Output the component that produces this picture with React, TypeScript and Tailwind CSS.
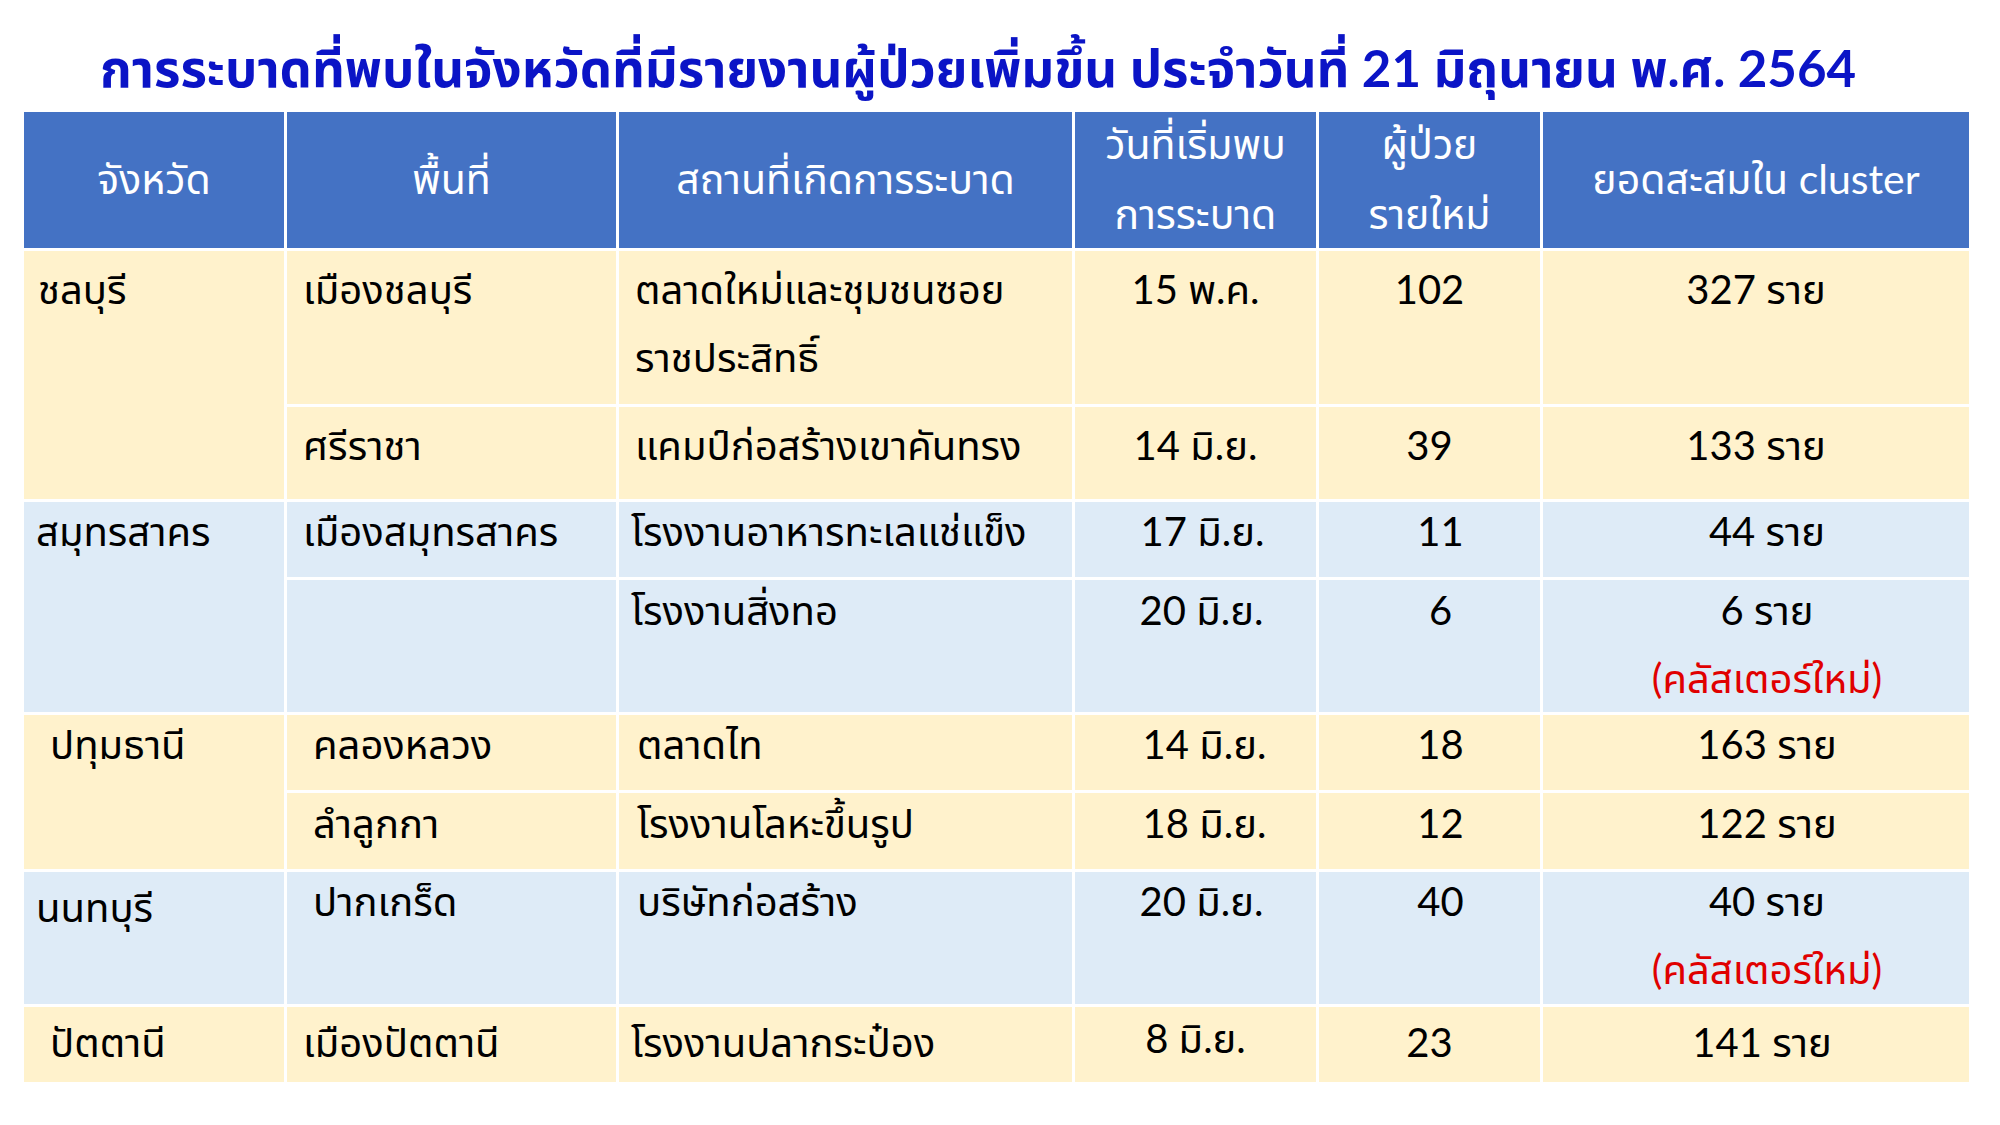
import React from 'react';

const FONT = "font-['Lato','Noto_Sans_Thai','Noto_Sans_Thai_Looped','Garuda','Loma','Waree','Tahoma','Noto_Sans',sans-serif]";

type Cell = {
  lines: string[];
  bg: 'y' | 'b';
  align?: 'left' | 'center';
  pad?: string;
  span?: boolean;
  note?: boolean;
};

const rows: Cell[][] = [
  [
    { lines: ['ชลบุรี'], bg: 'y', span: true, pad: 'pl-[14px] pt-[13px]' },
    { lines: ['เมืองชลบุรี'], bg: 'y', pad: 'pl-[16px] pt-[13px]' },
    { lines: ['ตลาดใหม่และชุมชนซอย', 'ราชประสิทธิ์'], bg: 'y', pad: 'pl-[16px] pt-[13px]' },
    { lines: ['15 พ.ค.'], bg: 'y', align: 'center', pad: 'pt-[13px]' },
    { lines: ['102'], bg: 'y', align: 'center', pad: 'pt-[13px]' },
    { lines: ['327 ราย'], bg: 'y', align: 'center', pad: 'pt-[13px]' },
  ],
  [
    { lines: ['ศรีราชา'], bg: 'y', pad: 'pl-[16px] pt-[13px]' },
    { lines: ['แคมป์ก่อสร้างเขาคันทรง'], bg: 'y', pad: 'pl-[16px] pt-[13px]' },
    { lines: ['14 มิ.ย.'], bg: 'y', align: 'center', pad: 'pt-[13px]' },
    { lines: ['39'], bg: 'y', align: 'center', pad: 'pt-[13px]' },
    { lines: ['133 ราย'], bg: 'y', align: 'center', pad: 'pt-[13px]' },
  ],
  [
    { lines: ['สมุทรสาคร'], bg: 'b', span: true, pad: 'pl-[12px] pt-[4px]' },
    { lines: ['เมืองสมุทรสาคร'], bg: 'b', pad: 'pl-[16px] pt-[4px]' },
    { lines: ['โรงงานอาหารทะเลแช่แข็ง'], bg: 'b', pad: 'pl-[12px] pt-[4px]' },
    { lines: ['17 มิ.ย.'], bg: 'b', align: 'center', pad: 'pl-[14px] pt-[4px]' },
    { lines: ['11'], bg: 'b', align: 'center', pad: 'pl-[22px] pt-[4px]' },
    { lines: ['44 ราย'], bg: 'b', align: 'center', pad: 'pl-[22px] pt-[4px]' },
  ],
  [
    { lines: [''], bg: 'b' },
    { lines: ['โรงงานสิ่งทอ'], bg: 'b', pad: 'pl-[12px] pt-[5px]' },
    { lines: ['20 มิ.ย.'], bg: 'b', align: 'center', pad: 'pl-[12px] pt-[5px]' },
    { lines: ['6'], bg: 'b', align: 'center', pad: 'pl-[22px] pt-[5px]' },
    { lines: ['6 ราย', '(คลัสเตอร์ใหม่)'], bg: 'b', align: 'center', note: true, pad: 'pl-[22px] pt-[5px]' },
  ],
  [
    { lines: ['ปทุมธานี'], bg: 'y', span: true, pad: 'pl-[26px] pt-[4px]' },
    { lines: ['คลองหลวง'], bg: 'y', pad: 'pl-[26px] pt-[4px]' },
    { lines: ['ตลาดไท'], bg: 'y', pad: 'pl-[18px] pt-[4px]' },
    { lines: ['14 มิ.ย.'], bg: 'y', align: 'center', pad: 'pl-[18px] pt-[4px]' },
    { lines: ['18'], bg: 'y', align: 'center', pad: 'pl-[22px] pt-[4px]' },
    { lines: ['163 ราย'], bg: 'y', align: 'center', pad: 'pl-[22px] pt-[4px]' },
  ],
  [
    { lines: ['ลำลูกกา'], bg: 'y', pad: 'pl-[26px] pt-[5px]' },
    { lines: ['โรงงานโลหะขึ้นรูป'], bg: 'y', pad: 'pl-[18px] pt-[5px]' },
    { lines: ['18 มิ.ย.'], bg: 'y', align: 'center', pad: 'pl-[18px] pt-[5px]' },
    { lines: ['12'], bg: 'y', align: 'center', pad: 'pl-[22px] pt-[5px]' },
    { lines: ['122 ราย'], bg: 'y', align: 'center', pad: 'pl-[22px] pt-[5px]' },
  ],
  [
    { lines: ['นนทบุรี'], bg: 'b', pad: 'pl-[12px] pt-[10px]' },
    { lines: ['ปากเกร็ด'], bg: 'b', pad: 'pl-[26px] pt-[4px]' },
    { lines: ['บริษัทก่อสร้าง'], bg: 'b', pad: 'pl-[18px] pt-[4px]' },
    { lines: ['20 มิ.ย.'], bg: 'b', align: 'center', pad: 'pl-[12px] pt-[4px]' },
    { lines: ['40'], bg: 'b', align: 'center', pad: 'pl-[22px] pt-[4px]' },
    { lines: ['40 ราย', '(คลัสเตอร์ใหม่)'], bg: 'b', align: 'center', note: true, pad: 'pl-[22px] pt-[4px]' },
  ],
  [
    { lines: ['ปัตตานี'], bg: 'y', pad: 'pl-[26px] pt-[10px]' },
    { lines: ['เมืองปัตตานี'], bg: 'y', pad: 'pl-[16px] pt-[10px]' },
    { lines: ['โรงงานปลากระป๋อง'], bg: 'y', pad: 'pl-[12px] pt-[10px]' },
    { lines: ['8 มิ.ย.'], bg: 'y', align: 'center', pad: 'pt-[6px]' },
    { lines: ['23'], bg: 'y', align: 'center', pad: 'pt-[10px]' },
    { lines: ['141 ราย'], bg: 'y', align: 'center', pad: 'pl-[12px] pt-[10px]' },
  ],
];

const headers: string[][] = [
  ['จังหวัด'],
  ['พื้นที่'],
  ['สถานที่เกิดการระบาด'],
  ['วันที่เริ่มพบ', 'การระบาด'],
  ['ผู้ป่วย', 'รายใหม่'],
  ['ยอดสะสมใน cluster'],
];

export default function App() {
  return (
    <div className={`w-[2000px] h-[1125px] bg-white overflow-hidden ${FONT}`}>
      <h1 className="h-[112px] pl-[100px] pt-[38px] text-[51px] leading-[60px] font-bold text-[#0B14C6] whitespace-nowrap">
        การระบาดที่พบในจังหวัดที่มีรายงานผู้ป่วยเพิ่มขึ้น ประจำวันที่ 21 มิถุนายน พ.ศ. 2564
      </h1>
      <div className="ml-[24px] w-[1945px] grid grid-cols-[260px_329px_453px_241px_221px_426px] grid-rows-[136px_153px_92px_75px_132px_75px_76px_132px_75px] gap-[3px] text-[40px] leading-[50px] text-black">
        {headers.map((h, i) => (
          <div key={i} className="bg-[#4472C4] text-white flex flex-col items-center justify-center text-center text-[41px] gap-[20px] pb-[2px]">
            {h.map((l, j) => (
              <span key={j} className="whitespace-nowrap">{l}</span>
            ))}
          </div>
        ))}
        {rows.flat().map((c, i) => (
          <div
            key={i}
            className={`${c.bg === 'y' ? 'bg-[#FFF2CC]' : 'bg-[#DEEBF7]'} ${c.span ? 'row-span-2' : ''} ${c.align === 'center' ? 'text-center' : 'text-left'} ${c.pad ?? ''} flex flex-col gap-[18px]`}
          >
            {c.lines.map((l, j) => (
              <span key={j} className={`whitespace-nowrap ${c.note && j === 1 ? 'text-[#E00000]' : ''}`}>
                {l}
              </span>
            ))}
          </div>
        ))}
      </div>
    </div>
  );
}
